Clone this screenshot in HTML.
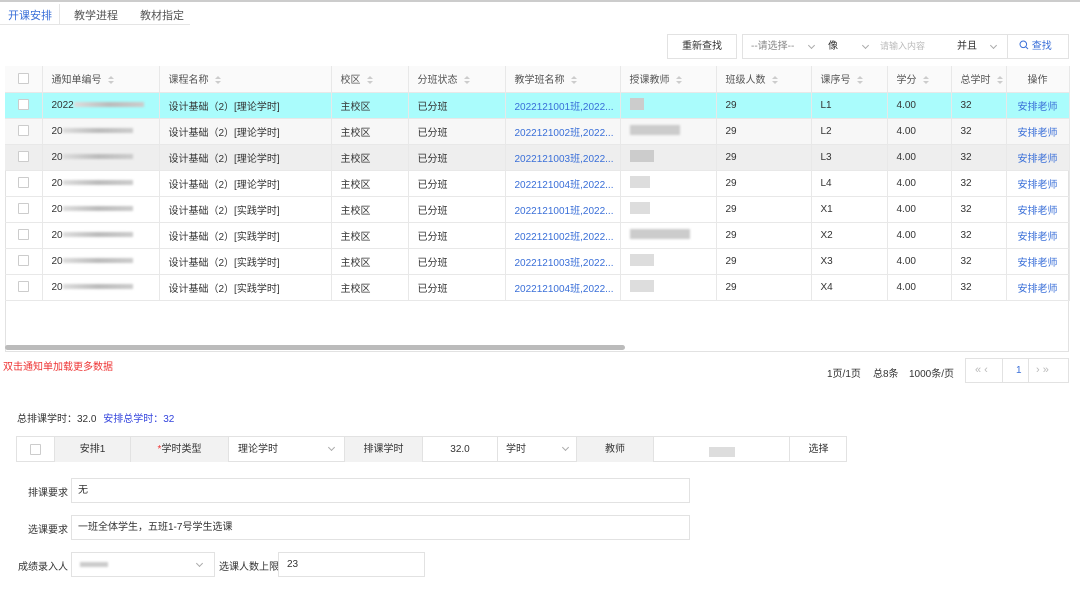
<!DOCTYPE html>
<html><head><meta charset="utf-8"><style>
*{box-sizing:border-box;margin:0;padding:0}
body{width:1080px;height:597px;background:#fff;font-family:"Liberation Sans","Noto Sans CJK SC",sans-serif;font-size:10px;color:#333;position:relative;overflow:hidden}
.a{position:absolute}
table{border-collapse:collapse;position:absolute;left:5px;top:66px;table-layout:fixed}
td,th{height:26px;border-bottom:1px solid #e8e8e8;border-right:1px solid #e8e8e8;padding-left:9px;font-weight:normal;text-align:left;white-space:nowrap;overflow:hidden;font-size:10px}
th{color:#555}
.cb{display:inline-block;width:11px;height:11px;border:1px solid #ccc;background:#fff;border-radius:1px;vertical-align:middle}
.srt{display:inline-block;vertical-align:middle;margin-left:6px;width:6px;height:9px;position:relative}
.srt:before{content:"";position:absolute;left:0;top:0;border:3px solid transparent;border-bottom:3px solid #ccc;border-top:0}
.srt:after{content:"";position:absolute;left:0;top:5px;border:3px solid transparent;border-top:3px solid #ccc;border-bottom:0}
.lk{color:#3a6fd8}
.blur{display:inline-block;width:70px;height:5px;background:linear-gradient(90deg,#ddd,#bbb,#ccc);vertical-align:middle;filter:blur(1px)}
.box{border:1px solid #e2e2e2;position:absolute;background:#fff}
.cell{position:absolute;top:0;height:25px;line-height:25px;border-right:1px solid #e2e2e2;text-align:center}
.chev{position:absolute;width:5px;height:5px;border-right:1px solid #aaa;border-bottom:1px solid #aaa;transform:rotate(45deg);top:8px}
</style></head><body>
<div class="a" style="left:0;top:0;width:1080px;height:2px;background:#ccc"></div>
<div class="a" style="left:0;top:24px;width:190px;height:1px;background:#e5e5e5"></div>
<div class="a" style="left:59px;top:4px;width:1px;height:20px;background:#e5e5e5"></div>
<div class="a" style="left:8px;top:7px;font-size:11px;color:#3a6fd8">开课安排</div>
<div class="a" style="left:74px;top:7px;font-size:11px;color:#555">教学进程</div>
<div class="a" style="left:140px;top:7px;font-size:11px;color:#555">教材指定</div>

<div class="box" style="left:667px;top:34px;width:70px;height:25px;text-align:center;line-height:23px;color:#333">重新查找</div>
<div class="box" style="left:742px;top:34px;width:327px;height:25px;line-height:23px;color:#888">
<span class="a" style="left:8px">--请选择--</span><span class="chev" style="left:66px"></span>
<span class="a" style="left:85px;color:#333">像</span><span class="chev" style="left:120px"></span>
<span class="a" style="left:137px;color:#bbb;font-size:9px">请输入内容</span>
<span class="a" style="left:214px;color:#333">并且</span><span class="chev" style="left:248px"></span>
<span class="a" style="left:264px;top:0;width:1px;height:23px;background:#e2e2e2"></span>
<span class="a" style="left:276px;color:#3a6fd8"><svg width="10" height="10" viewBox="0 0 10 10" style="vertical-align:-1px"><circle cx="4.3" cy="4.3" r="3.3" fill="none" stroke="#3a6fd8" stroke-width="1"/><path d="M6.8 6.8L9 9" stroke="#3a6fd8" stroke-width="1"/></svg> 查找</span></div>

<div class="a" style="left:5px;top:66px;width:1064px;height:286px;border:1px solid #e2e2e2"></div>
<table>
<colgroup><col width="37"><col width="117"><col width="172"><col width="77"><col width="97"><col width="115"><col width="96"><col width="95"><col width="76"><col width="64"><col width="55"><col width="63"></colgroup>
<tr style="background:#fafafa"><th style="text-align:center;padding:0"><span class="cb"></span></th><th>通知单编号<span class="srt"></span></th><th>课程名称<span class="srt"></span></th><th>校区<span class="srt"></span></th><th>分班状态<span class="srt"></span></th><th>教学班名称<span class="srt"></span></th><th>授课教师<span class="srt"></span></th><th>班级人数<span class="srt"></span></th><th>课序号<span class="srt"></span></th><th>学分<span class="srt"></span></th><th>总学时<span class="srt"></span></th><th style="text-align:center;padding:0">操作</th></tr>
<tr style="background:#aafcfc"><td style="text-align:center;padding:0"><span class="cb"></span></td><td>2022<span class="blur"></span></td><td>设计基础（2）[理论学时]</td><td>主校区</td><td>已分班</td><td class="lk">2022121001班,2022...</td><td><span style="display:inline-block;width:14px;height:12px;background:#ccc"></span></td><td>29</td><td>L1</td><td>4.00</td><td>32</td><td class="lk" style="text-align:center;padding:0">安排老师</td></tr>
<tr style="background:#f7f7f7"><td style="text-align:center;padding:0"><span class="cb"></span></td><td>20<span class="blur"></span></td><td>设计基础（2）[理论学时]</td><td>主校区</td><td>已分班</td><td class="lk">2022121002班,2022...</td><td><span style="display:inline-block;width:50px;height:10px;background:#ccc;filter:blur(1px)"></span></td><td>29</td><td>L2</td><td>4.00</td><td>32</td><td class="lk" style="text-align:center;padding:0">安排老师</td></tr>
<tr style="background:#eeeeee"><td style="text-align:center;padding:0"><span class="cb"></span></td><td>20<span class="blur"></span></td><td>设计基础（2）[理论学时]</td><td>主校区</td><td>已分班</td><td class="lk">2022121003班,2022...</td><td><span style="display:inline-block;width:24px;height:12px;background:#ccc"></span></td><td>29</td><td>L3</td><td>4.00</td><td>32</td><td class="lk" style="text-align:center;padding:0">安排老师</td></tr>
<tr><td style="text-align:center;padding:0"><span class="cb"></span></td><td>20<span class="blur"></span></td><td>设计基础（2）[理论学时]</td><td>主校区</td><td>已分班</td><td class="lk">2022121004班,2022...</td><td><span style="display:inline-block;width:20px;height:12px;background:#ddd"></span></td><td>29</td><td>L4</td><td>4.00</td><td>32</td><td class="lk" style="text-align:center;padding:0">安排老师</td></tr>
<tr><td style="text-align:center;padding:0"><span class="cb"></span></td><td>20<span class="blur"></span></td><td>设计基础（2）[实践学时]</td><td>主校区</td><td>已分班</td><td class="lk">2022121001班,2022...</td><td><span style="display:inline-block;width:20px;height:12px;background:#ddd"></span></td><td>29</td><td>X1</td><td>4.00</td><td>32</td><td class="lk" style="text-align:center;padding:0">安排老师</td></tr>
<tr><td style="text-align:center;padding:0"><span class="cb"></span></td><td>20<span class="blur"></span></td><td>设计基础（2）[实践学时]</td><td>主校区</td><td>已分班</td><td class="lk">2022121002班,2022...</td><td><span style="display:inline-block;width:60px;height:10px;background:#ccc;filter:blur(1px)"></span></td><td>29</td><td>X2</td><td>4.00</td><td>32</td><td class="lk" style="text-align:center;padding:0">安排老师</td></tr>
<tr><td style="text-align:center;padding:0"><span class="cb"></span></td><td>20<span class="blur"></span></td><td>设计基础（2）[实践学时]</td><td>主校区</td><td>已分班</td><td class="lk">2022121003班,2022...</td><td><span style="display:inline-block;width:24px;height:12px;background:#ddd"></span></td><td>29</td><td>X3</td><td>4.00</td><td>32</td><td class="lk" style="text-align:center;padding:0">安排老师</td></tr>
<tr><td style="text-align:center;padding:0"><span class="cb"></span></td><td>20<span class="blur"></span></td><td>设计基础（2）[实践学时]</td><td>主校区</td><td>已分班</td><td class="lk">2022121004班,2022...</td><td><span style="display:inline-block;width:24px;height:12px;background:#ddd"></span></td><td>29</td><td>X4</td><td>4.00</td><td>32</td><td class="lk" style="text-align:center;padding:0">安排老师</td></tr>
</table>
<div class="a" style="left:5px;top:345px;width:620px;height:5px;border-radius:3px;background:#bbb"></div>

<div class="a" style="left:3px;top:358px;color:#e33;font-size:10px">双击通知单加载更多数据</div>
<div class="a" style="left:827px;top:365px;color:#333">1页/1页</div>
<div class="a" style="left:873px;top:365px;color:#333">总8条</div>
<div class="a" style="left:909px;top:365px;color:#333">1000条/页</div>
<div class="box" style="left:965px;top:358px;width:104px;height:25px;line-height:23px;color:#bbb;font-size:11px">
<span class="a" style="left:9px">« ‹</span><span class="a" style="left:36px;top:0;width:1px;height:23px;background:#e2e2e2"></span>
<span class="a" style="left:50px;color:#3a6fd8;font-size:10px">1</span><span class="a" style="left:62px;top:0;width:1px;height:23px;background:#e2e2e2"></span>
<span class="a" style="left:70px">› »</span></div>

<div class="a" style="left:17px;top:410px">总排课学时：32.0 <span style="color:#3344dd;margin-left:4px">安排总学时：32</span></div>
<div class="box" style="left:16px;top:436px;width:831px;height:26px;border-color:#e2e2e2">
<div class="cell" style="left:0;width:38px"><span class="cb"></span></div>
<div class="cell" style="left:38px;width:76px;background:#f2f2f2">安排1</div>
<div class="cell" style="left:114px;width:98px;background:#f2f2f2"><span style="color:#e33">*</span>学时类型</div>
<div class="cell" style="left:212px;width:116px;text-align:left;padding-left:9px">理论学时<span class="chev" style="right:10px"></span></div>
<div class="cell" style="left:328px;width:78px;background:#f2f2f2">排课学时</div>
<div class="cell" style="left:406px;width:75px">32.0</div>
<div class="cell" style="left:481px;width:79px;text-align:left;padding-left:8px">学时<span class="chev" style="right:8px"></span></div>
<div class="cell" style="left:560px;width:77px;background:#f2f2f2">教师</div>
<div class="cell" style="left:637px;width:136px"><span style="display:inline-block;width:26px;height:10px;background:#ddd;vertical-align:middle;margin-top:6px"></span></div>
<div class="cell" style="left:773px;width:57px;border-right:none">选择</div>
</div>

<div class="a" style="left:28px;top:484px">排课要求</div>
<div class="box" style="left:71px;top:478px;width:619px;height:25px;line-height:23px;padding-left:6px">无</div>
<div class="a" style="left:28px;top:521px">选课要求</div>
<div class="box" style="left:71px;top:515px;width:619px;height:25px;line-height:23px;padding-left:6px">一班全体学生，五班1-7号学生选课</div>
<div class="a" style="left:18px;top:558px">成绩录入人</div>
<div class="box" style="left:71px;top:552px;width:144px;height:25px;line-height:23px;padding-left:8px"><span style="display:inline-block;width:28px;height:5px;background:#ccc;filter:blur(1px);vertical-align:middle"></span><span class="chev" style="right:12px"></span></div>
<div class="a" style="left:219px;top:558px">选课人数上限</div>
<div class="box" style="left:278px;top:552px;width:147px;height:25px;line-height:23px;padding-left:8px">23</div>
</body></html>
